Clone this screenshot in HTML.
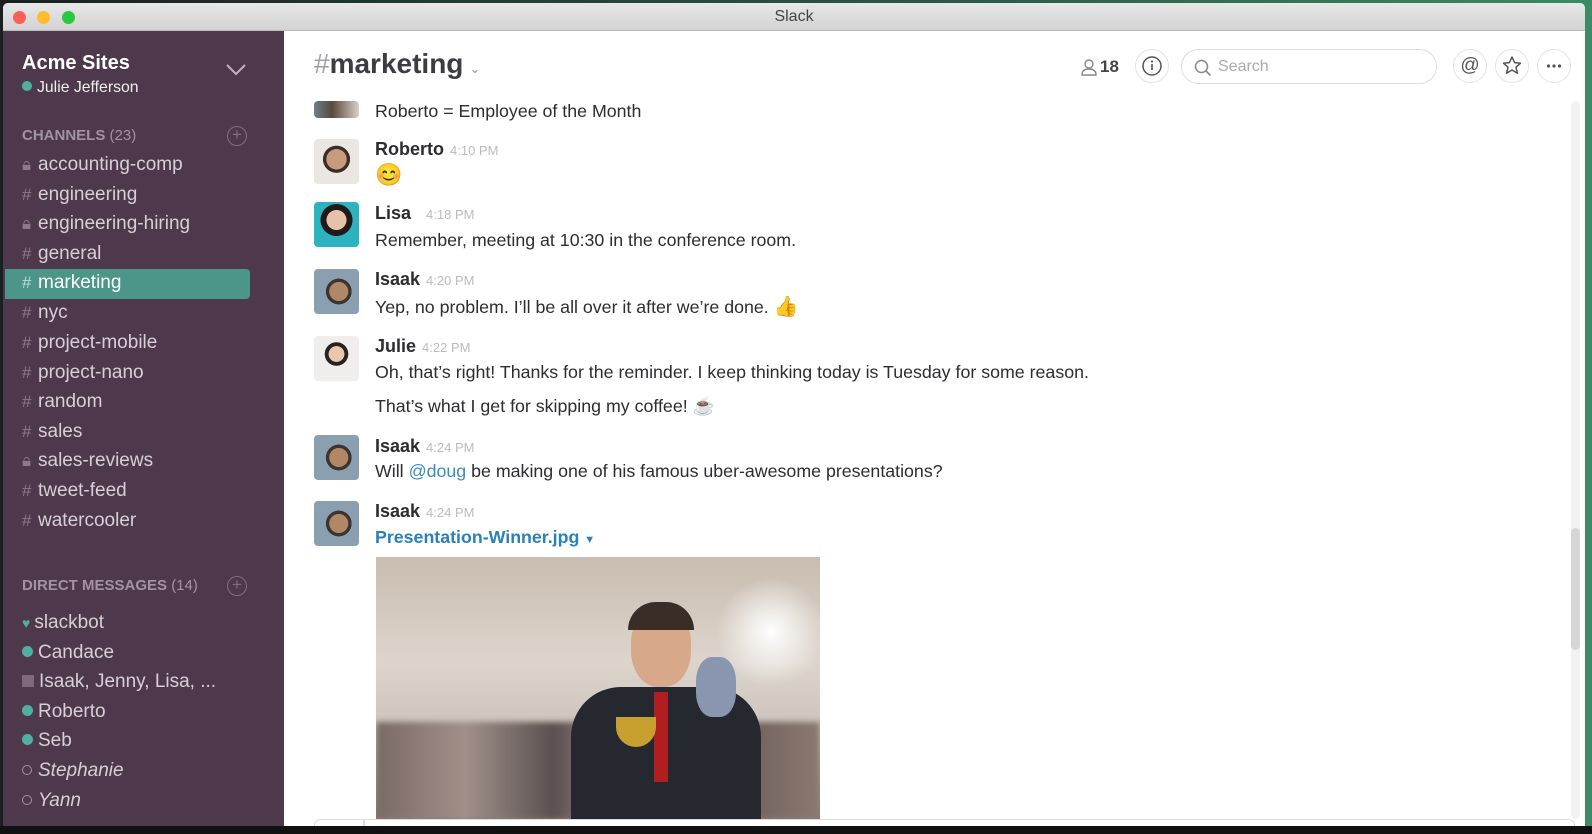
<!DOCTYPE html>
<html><head><meta charset="utf-8"><style>
*{margin:0;padding:0;box-sizing:border-box}
body{width:1592px;height:834px;overflow:hidden;background:#1c2a26;font-family:"Liberation Sans",sans-serif;position:relative}
.desk{position:absolute;left:0;top:0;width:1592px;height:834px;background:linear-gradient(90deg,#1a1f1f,#2b5a48 60%,#3c8a66)}
.win{position:absolute;left:3px;top:3px;width:1582px;height:823px;background:#fff;border-radius:5px 5px 0 0;overflow:hidden}
.title{position:absolute;left:0;top:0;width:100%;height:28px;background:linear-gradient(#e9e8e9,#d3d2d3);border-bottom:1px solid #bdbcbd;text-align:center;font-size:16px;color:#444;line-height:28px}
.dot{position:absolute;top:8px;width:13px;height:13px;border-radius:50%}
.side{position:absolute;left:0;top:28px;width:281px;height:800px;background:#4d394b;color:#fff}
.main{position:absolute;left:281px;top:28px;right:0;bottom:0;background:#fff}
.it{position:absolute;left:19px;font-size:19px;color:#d8cfd6;white-space:nowrap}
.it i{font-style:normal;color:#8c7a89;font-size:17px;display:inline-block;width:16px}
.hd{position:absolute;left:19px;font-size:15px;color:#a293a0;font-weight:bold}
.hd span{font-weight:normal}
.plus{position:absolute;left:224px;width:20px;height:20px;border:1.5px solid #806d7e;border-radius:50%;color:#806d7e;text-align:center;line-height:16px;font-size:17px}
.g{display:inline-block;width:11px;height:11px;border-radius:50%;background:#4fb0a0;margin-right:5px;vertical-align:1px}
.o{display:inline-block;width:10px;height:10px;border-radius:50%;border:1.5px solid #a293a0;margin-right:6px;vertical-align:1px}
.av{position:absolute;left:30px;width:45px;height:45px;border-radius:4px;overflow:hidden}
.nm{position:absolute;left:91px;font-size:18px;font-weight:bold;color:#2c2d30}
.nm span{font-weight:normal;font-size:13px;color:#bbb;margin-left:6px}
.tx{position:absolute;left:91px;font-size:17.8px;color:#2c2d30;white-space:nowrap}
.cb{position:absolute;width:34px;height:34px;border:1px solid #e3e3e3;border-radius:50%}
</style></head><body>
<div class="desk"></div>
<div class="win">
 <div class="title">Slack
  <div class="dot" style="left:10px;background:#fc5f57"></div>
  <div class="dot" style="left:34px;background:#fdbc2e"></div>
  <div class="dot" style="left:59px;background:#29c840"></div>
 </div>
 <div class="side">
  <div style="position:absolute;left:19px;top:21px;font-size:20px;font-weight:bold">Acme Sites</div>
  <div style="position:absolute;left:19px;top:48px;font-size:15.8px;color:#eee"><span class="g" style="width:10px;height:10px"></span>Julie Jefferson</div>
  <svg style="position:absolute;left:222px;top:32px" width="22" height="14"><path d="M2 2 L11 11 L20 2" stroke="#bfb2bd" stroke-width="2" fill="none"/></svg>
  <div class="hd" style="top:96px">CHANNELS <span>(23)</span></div>
  <div class="plus" style="top:95px">+</div>
  <div class="it" style="top:123px"><i>🔒︎</i>accounting-comp</div>
  <div class="it" style="top:153px"><i>#</i>engineering</div>
  <div class="it" style="top:182px"><i>🔒︎</i>engineering-hiring</div>
  <div class="it" style="top:212px"><i>#</i>general</div>
  <div style="position:absolute;left:2px;top:238px;width:245px;height:30px;background:#4c9689;border-radius:0 4px 4px 0"></div>
  <div class="it" style="top:241px;color:#fff"><i style="color:#b6dcd5">#</i>marketing</div>
  <div class="it" style="top:271px"><i>#</i>nyc</div>
  <div class="it" style="top:301px"><i>#</i>project-mobile</div>
  <div class="it" style="top:331px"><i>#</i>project-nano</div>
  <div class="it" style="top:360px"><i>#</i>random</div>
  <div class="it" style="top:390px"><i>#</i>sales</div>
  <div class="it" style="top:419px"><i>🔒︎</i>sales-reviews</div>
  <div class="it" style="top:449px"><i>#</i>tweet-feed</div>
  <div class="it" style="top:479px"><i>#</i>watercooler</div>
  <div class="hd" style="top:546px">DIRECT MESSAGES <span>(14)</span></div>
  <div class="plus" style="top:545px">+</div>
  <div class="it" style="top:581px"><span style="color:#4fb0a0;font-size:14px;margin-right:4px">♥</span>slackbot</div>
  <div class="it" style="top:611px"><span class="g"></span>Candace</div>
  <div class="it" style="top:640px"><span style="display:inline-block;width:12px;height:12px;background:#7d6a7b;margin-right:5px;vertical-align:0"></span>Isaak, Jenny, Lisa, ...</div>
  <div class="it" style="top:670px"><span class="g"></span>Roberto</div>
  <div class="it" style="top:699px"><span class="g"></span>Seb</div>
  <div class="it" style="top:729px;font-style:italic"><span class="o"></span>Stephanie</div>
  <div class="it" style="top:759px;font-style:italic"><span class="o"></span>Yann</div>
 </div>
 <div class="main">
  <div style="position:absolute;left:30px;top:17px;font-size:28px;font-weight:bold;color:#3d3c40"><span style="color:#9e9ea6;font-weight:normal">#</span>marketing<span style="font-size:13px;color:#999;font-weight:normal;margin-left:6px">⌄</span></div>
  <svg style="position:absolute;left:796px;top:27px" width="18" height="18"><circle cx="9" cy="6" r="4" stroke="#888" stroke-width="1.4" fill="none"/><path d="M2 17 Q2 11 9 11 Q16 11 16 17 Z" stroke="#888" stroke-width="1.4" fill="none"/></svg>
  <div style="position:absolute;left:816px;top:26px;font-size:17px;font-weight:bold;color:#444">18</div>
  <div class="cb" style="left:851px;top:18px"><svg width="32" height="32"><circle cx="16" cy="16" r="9" stroke="#555" stroke-width="1.5" fill="none"/><rect x="15.2" y="14" width="1.6" height="6" fill="#555"/><circle cx="16" cy="11.5" r="1.1" fill="#555"/></svg></div>
  <div style="position:absolute;left:897px;top:18px;width:256px;height:35px;border:1px solid #ddd;border-radius:18px;font-size:16px;color:#aaa;line-height:33px;padding-left:36px">Search
   <svg style="position:absolute;left:12px;top:9px" width="18" height="18"><circle cx="7.5" cy="7.5" r="6" stroke="#888" stroke-width="1.5" fill="none"/><path d="M12 12 L16.5 16.5" stroke="#888" stroke-width="1.6"/></svg></div>
  <div class="cb" style="left:1169px;top:18px;font-size:19px;color:#555;text-align:center;line-height:31px">@</div>
  <div class="cb" style="left:1211px;top:18px"><svg width="32" height="32"><path d="M16 7 L18.6 12.6 L24.6 13.2 L20 17.2 L21.4 23.2 L16 20 L10.6 23.2 L12 17.2 L7.4 13.2 L13.4 12.6 Z" stroke="#555" stroke-width="1.5" fill="none" stroke-linejoin="round"/></svg></div>
  <div class="cb" style="left:1253px;top:18px"><svg width="32" height="32"><circle cx="10.5" cy="16" r="1.6" fill="#555"/><circle cx="16" cy="16" r="1.6" fill="#555"/><circle cx="21.5" cy="16" r="1.6" fill="#555"/></svg></div>

  <div class="av" style="top:70px;height:17px;background:linear-gradient(90deg,#6a7f90,#5a4a3a 40%,#d8d0c8)"></div>
  <div class="tx" style="top:70px">Roberto = Employee of the Month</div>

  <div class="av" style="top:108px;background:radial-gradient(circle at 50% 45%,#c89a7e 0 30%,#3a2e28 31% 40%,#eae6e2 41%)"></div>
  <div class="nm" style="top:108px">Roberto<span>4:10 PM</span></div>
  <div class="tx" style="top:131px;font-size:22px">😊</div>

  <div class="av" style="top:171px;background:radial-gradient(circle at 50% 40%,#e8c2a8 0 28%,#1e1a1a 29% 45%,#2db3c0 46%)"></div>
  <div class="nm" style="top:172px">Lisa <span style="margin-left:10px">4:18 PM</span></div>
  <div class="tx" style="top:199px">Remember, meeting at 10:30 in the conference room.</div>

  <div class="av" style="top:238px;background:radial-gradient(circle at 55% 50%,#b08868 0 28%,#3d3430 29% 38%,#8aa0b0 39%)"></div>
  <div class="nm" style="top:238px">Isaak<span>4:20 PM</span></div>
  <div class="tx" style="top:263px">Yep, no problem. I’ll be all over it after we’re done. <span style="font-size:20px">👍</span></div>

  <div class="av" style="top:305px;background:radial-gradient(circle at 50% 40%,#e8c8b0 0 22%,#2a2220 23% 33%,#f0eeec 34%)"></div>
  <div class="nm" style="top:305px">Julie<span>4:22 PM</span></div>
  <div class="tx" style="top:331px">Oh, that’s right! Thanks for the reminder. I keep thinking today is Tuesday for some reason.</div>
  <div class="tx" style="top:365px">That’s what I get for skipping my coffee! ☕</div>

  <div class="av" style="top:404px;background:radial-gradient(circle at 55% 50%,#b08868 0 28%,#3d3430 29% 38%,#8aa0b0 39%)"></div>
  <div class="nm" style="top:405px">Isaak<span>4:24 PM</span></div>
  <div class="tx" style="top:430px">Will <span style="color:#3a8bc4">@doug</span> be making one of his famous uber-awesome presentations?</div>

  <div class="av" style="top:470px;background:radial-gradient(circle at 55% 50%,#b08868 0 28%,#3d3430 29% 38%,#8aa0b0 39%)"></div>
  <div class="nm" style="top:470px">Isaak<span>4:24 PM</span></div>
  <div class="tx" style="top:496px;color:#2a80b9;font-weight:bold">Presentation-Winner.jpg <span style="font-size:11px">▼</span></div>

  <div style="position:absolute;left:92px;top:526px;width:444px;height:262px;overflow:hidden;background:linear-gradient(#c9bcb0,#ddd5cc 40%,#d0c8c0 60%,#8c7e76)">
   <div style="position:absolute;left:340px;top:20px;width:110px;height:110px;border-radius:50%;background:radial-gradient(#fff,rgba(255,255,255,0) 70%)"></div>
   <div style="position:absolute;left:0;top:165px;width:444px;height:97px;background:linear-gradient(90deg,#7a6a64,#a09088 20%,#5a5050 40%,#b8aca4 60%,#6a5c58 80%,#8a7a70);filter:blur(3px)"></div>
   <div style="position:absolute;left:255px;top:50px;width:60px;height:80px;border-radius:45%;background:#d7a889"></div>
   <div style="position:absolute;left:252px;top:45px;width:66px;height:28px;border-radius:30px 30px 0 0;background:#3a2c26"></div>
   <div style="position:absolute;left:195px;top:130px;width:190px;height:140px;border-radius:50px 50px 0 0;background:#25282e"></div>
   <div style="position:absolute;left:278px;top:135px;width:14px;height:90px;background:#b01e22"></div>
   <div style="position:absolute;left:240px;top:160px;width:40px;height:30px;border-radius:0 0 20px 20px;background:#c8a030"></div>
   <div style="position:absolute;left:320px;top:100px;width:40px;height:60px;border-radius:40%;background:#8a96b0"></div>
  </div>

  <div style="position:absolute;left:30px;top:788px;width:1261px;height:20px;border:1.5px solid #ddd;border-bottom:none;border-radius:6px 6px 0 0;background:#fff"></div>
  <div style="position:absolute;left:79px;top:788px;width:1.5px;height:20px;background:#ddd"></div>
  <div style="position:absolute;left:1287px;top:70px;width:9px;height:718px;background:#f2f2f2;border-radius:5px"></div>
  <div style="position:absolute;left:1287px;top:497px;width:9px;height:122px;background:#d6d6d8;border-radius:5px"></div>
 </div>
</div>
<div style="position:absolute;left:0;top:826px;width:1592px;height:8px;background:#111"></div>
</body></html>
